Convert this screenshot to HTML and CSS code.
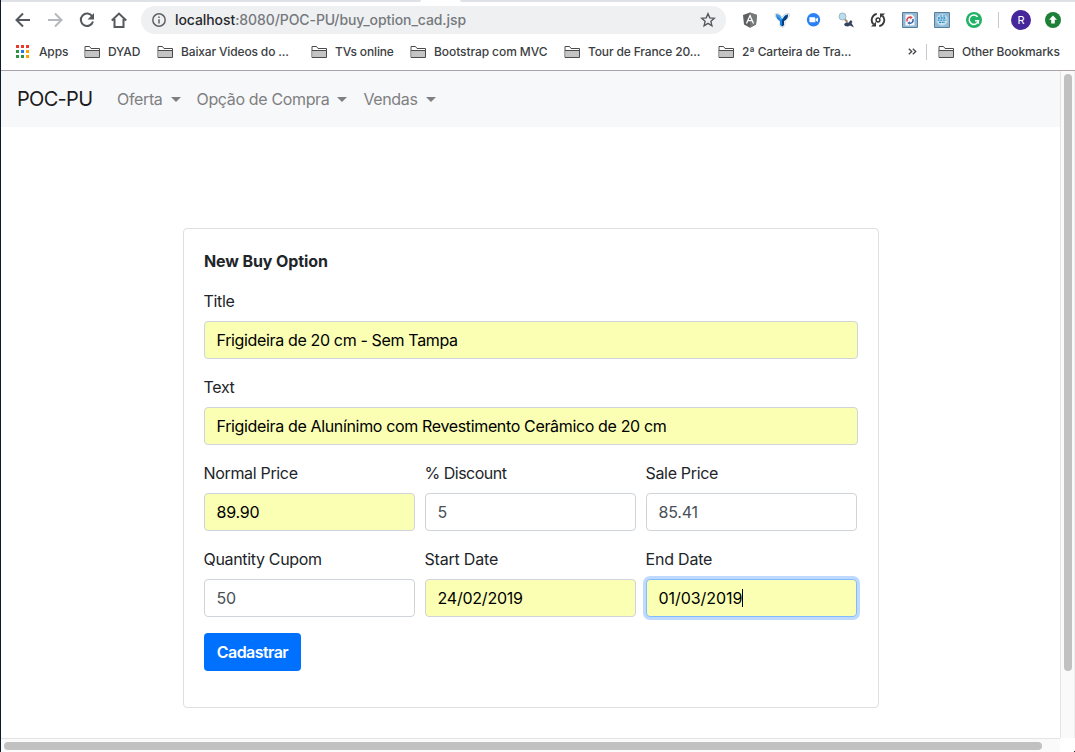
FILE: index.html
```
<!DOCTYPE html>
<html lang="pt-BR">
<head>
<meta charset="utf-8">
<title>POC-PU</title>
<link rel="stylesheet" href="styles.css">
</head>
<body>
<div class="window">
  <header class="chrome">
    <div class="tabstrip"><i class="tab-left"></i><i class="tab-right"></i></div>
    <div class="toolbar">
      <div class="nav-buttons">
        <svg width="16" height="16" viewBox="0 0 16 16" fill="none" stroke="#55595e" stroke-width="2"><path d="M15 8H2M8 1.5L1.5 8 8 14.5"/></svg>
        <svg width="16" height="16" viewBox="0 0 16 16" fill="none" stroke="#b4b7bb" stroke-width="2"><path d="M1 8h13M8 1.500L14.500 8 8 14.500"/></svg>
        <svg width="16" height="16" viewBox="0 0 16 16" fill="none" stroke="#55595e" stroke-width="2"><path d="M13.300 4.500A6.200 6.200 0 1 0 14 9.500"/><path d="M15 1v6.500H8.500z" fill="#55595e" stroke="none"/></svg>
        <svg width="16" height="16" viewBox="0 0 16 16" fill="none" stroke="#55595e" stroke-width="2"><path d="M.8 8.500L8 1.600l7.200 6.900M3.500 7v8h9V7"/></svg>
      </div>
      <div class="omnibox">
        <svg width="14" height="14" viewBox="0 0 14 14" fill="none" stroke="#5f6368" stroke-width="1.500"><circle cx="7" cy="7" r="6.200"/><path d="M7 6.200v4.300M7 3.400v1.600"/></svg>
        <span class="url"><b>localhost</b>:8080/POC-PU/buy_option_cad.jsp</span>
        <svg width="16" height="16" viewBox="0 0 16 16" fill="none" stroke="#55595e" stroke-width="1.400"><path d="M8 1.700l1.800 4.200 4.500.4-3.400 3 1 4.500L8 11.400l-3.900 2.400 1-4.500-3.400-3 4.500-.4z"/></svg>
      </div>
      <div class="extensions">
        <svg width="16" height="16" viewBox="0 0 16 16"><path d="M8 .5L15 3l-1 9.500L8 15.700 2 12.500 1 3z" fill="#5d5f61"/><path d="M8 .5L15 3l-1 9.500L8 15.700z" fill="#77797b"/><path d="M4.500 11.500L8 3.500l3.500 8M5.800 8.700h4.400" fill="none" stroke="#fff" stroke-width="1.300"/></svg>
        <svg width="16" height="16" viewBox="0 0 16 16"><path d="M1.500 1.500l4 .5 2.500 3 3-3 4-.5.500 2.500-4.500 5.500v4l-2.500 2-2.500-1.500v-4L1 4z" fill="#fff" stroke="#d4d4d4"/><path d="M2 2.500q3-1 5 2.500l1 2 1.500-2Q11 2 14 2.500q0 4-4 6.500v4l-2 1.500L6 13V9Q2 6.500 2 2.500z" fill="#1681e4"/><path d="M8 8.500l3-4.500 3-1.500q0 4-4 6.500v4l-2 1.500z" fill="#093a79"/><path d="M3 3.500q2.500 0 4 4" fill="none" stroke="#62bdf6"/></svg>
        <svg width="16" height="16" viewBox="0 0 16 16"><circle cx="7.500" cy="7.700" r="6.700" fill="#2b80f5"/><path d="M3.400 5.200h4.900q1 0 1 1v4H4.400q-1 0-1-1zM9.700 7l2.200-1.600v4.700L9.700 8.500z" fill="#fff"/></svg>
        <svg width="16" height="16" viewBox="0 0 16 16"><circle cx="4.500" cy="4.500" r="3.500" fill="#b9def0" stroke="#9bb7c4"/><path d="M7 7.500l2.500 2.500" stroke="#a08563" stroke-width="1.800"/><path d="M6 12l3-2 1 1 3-3 1.500 2-1 1 2.500 4.500-4-2-2 1-3-.500z" fill="#33425c"/></svg>
        <svg width="16" height="16" viewBox="0 0 16 16" fill="none" stroke="#3a3a3a" stroke-width="1.900"><path d="M6.800 1.900A6.200 6.200 0 0 0 3.400 12.200M9.200 14.100A6.200 6.200 0 0 0 12.600 3.800"/><path d="M1 14.600h5V9.800zM15 1.400h-5v4.800z" fill="#3a3a3a" stroke="none"/><circle cx="8" cy="8" r="1.900" stroke-width="1.500"/></svg>
        <svg width="16" height="16" viewBox="0 0 16 16"><path d="M.5.5h15v15H.5z" fill="#92b8d4" stroke="#56809e"/><path d="M3.500 2.500H10l2.500 2.500v8.500h-9z" fill="#f5f8fb"/><path d="M5.200 9.500A3 3 0 0 1 8.500 5.300" fill="none" stroke="#d74242" stroke-width="1.500"/><path d="M10.800 7A3 3 0 0 1 7.500 11.200" fill="none" stroke="#315fa5" stroke-width="1.500"/><path d="M8.200 3.700l2.500 1.800-2.500 1.800z" fill="#d74242"/><path d="M7.800 12.800L5.300 11l2.500-1.800z" fill="#315fa5"/></svg>
        <svg width="16" height="16" viewBox="0 0 16 16"><path d="M.5.5h15v15H.5z" fill="#92b8d4" stroke="#56809e"/><circle cx="8" cy="7.800" r="5.700" fill="#c9e2f1" stroke="#a9cce0"/><path d="M4 6h8M3.500 8.200h9M5 10.400h6" stroke="#2688c2" stroke-width="1.300" stroke-dasharray="2 .7"/><path d="M6 4h5" stroke="#2688c2" stroke-dasharray="2 1"/></svg>
        <svg width="16" height="16" viewBox="0 0 16 16"><circle cx="8" cy="8" r="8" fill="#20b267"/><path d="M11.600 4.800A4.700 4.700 0 1 0 12.500 8.700H9" fill="none" stroke="#fff" stroke-width="1.500"/><path d="M12.500 8.500v3.300" fill="none" stroke="#fff"/></svg>
      </div>
      <i class="separator"></i>
      <span class="avatar">R</span>
      <svg class="update" width="16" height="16" viewBox="0 0 16 16"><circle cx="8" cy="8" r="8" fill="#1c8136"/><path d="M8 3.500l4 4.200H9.800v3.800H6.200V7.700H4z" fill="#fff"/></svg>
    </div>
    <div class="bookmarks">
      <svg class="apps" width="13" height="13" viewBox="0 0 13 13"><path d="M0 0h3v3H0zM5 0h3v3H5zM10 0h3v3h-3z" fill="#ea3a30"/><path d="M0 5h3v3H0zM0 10h3v3H0zM5 10h3v3H5z" fill="#2d9348"/><path d="M5 5h3v3H5z" fill="#2379e8"/><path d="M10 5h3v3h-3zM10 10h3v3h-3z" fill="#f4a409"/></svg>
      <span class="bm apps-label">Apps</span>
      <svg class="folder" viewBox="0 0 17 14"><use href="#folder"/></svg><span class="bm dyad">DYAD</span>
      <svg class="folder" viewBox="0 0 17 14"><use href="#folder"/></svg><span class="bm videos">Baixar Videos do ...</span>
      <svg class="folder" viewBox="0 0 17 14"><use href="#folder"/></svg><span class="bm tvs">TVs online</span>
      <svg class="folder" viewBox="0 0 17 14"><use href="#folder"/></svg><span class="bm bootstrap">Bootstrap com MVC</span>
      <svg class="folder" viewBox="0 0 17 14"><use href="#folder"/></svg><span class="bm tour">Tour de France 20...</span>
      <svg class="folder" viewBox="0 0 17 14"><use href="#folder"/></svg><span class="bm carteira">2ª Carteira de Tra...</span>
      <svg class="more" width="9" height="7" viewBox="0 0 9 7" fill="none" stroke="#484b4f" stroke-width="1.400"><path d="M.8.700l2.900 2.800L.8 6.300M4.800.700l2.900 2.800-2.900 2.800"/></svg>
      <i class="separator"></i>
      <svg class="folder" viewBox="0 0 17 14"><g id="folder"><path d="M1 12.500V1.500h4.500l1.500 2h8.500v9z" fill="#fff" stroke="#4b4b4b"/><path d="M1.500 5.500h13.500v6.500H1.500z" fill="#c4c4c4"/><path d="M1 5.500h14.500" stroke="#4b4b4b"/></g></svg><span class="bm">Other Bookmarks</span>
    </div>
  </header>
  <div class="viewport">
    <main class="page">
      <nav class="navbar">
        <span class="brand">POC-PU</span>
        <span class="menu">Oferta</span><i class="caret"></i>
        <span class="menu">Opção de Compra</span><i class="caret"></i>
        <span class="menu">Vendas</span><i class="caret"></i>
      </nav>
      <form class="card">
        <h1 class="card-title">New Buy Option</h1>
        <div class="group"><label>Title</label><div class="control filled">Frigideira de 20 cm - Sem Tampa</div></div>
        <div class="group"><label>Text</label><div class="control filled">Frigideira de Alunínimo com Revestimento Cerâmico de 20 cm</div></div>
        <div class="row">
          <div class="group"><label>Normal Price</label><div class="control number filled">89.90</div></div>
          <div class="group"><label class="tight">% Discount</label><div class="control number">5</div></div>
          <div class="group"><label>Sale Price</label><div class="control number">85.41</div></div>
        </div>
        <div class="row">
          <div class="group"><label>Quantity Cupom</label><div class="control number">50</div></div>
          <div class="group"><label class="loose">Start Date</label><div class="control number filled">24/02/2019</div></div>
          <div class="group"><label class="loose">End Date</label><div class="control date filled focused">01/03/2019<i class="cursor"></i></div></div>
        </div>
        <button class="submit" type="button">Cadastrar</button>
      </form>
    </main>
    <div class="vbar"><i></i></div>
    <div class="hbar"><i></i></div>
    <div class="corner"></div>
  </div>
</div>
</body>
</html>
```
FILE: styles.css
```
* { box-sizing: border-box; }
body { margin: 0; background: #fff; color: #212529; font: 16px/24px Inter, sans-serif; overflow: hidden; }
svg { display: block; flex: none; }
.window { width: 1075px; height: 752px; display: flex; flex-direction: column; border-left: 1px solid #111a2c; overflow: hidden; }
.chrome { height: 71px; border-bottom: 1px solid #aaa3a9; background: #fff; flex: none; }
.tabstrip { height: 2px; display: flex; justify-content: space-between; }
.tab-left { width: 420px; background: #dee1e6; border-bottom-right-radius: 2px; }
.tab-right { width: 615px; background: #dee1e6; border-bottom-left-radius: 2px; }
.toolbar { height: 36px; display: flex; align-items: center; }
.nav-buttons { display: flex; gap: 16px; margin-left: 14px; }
.omnibox { width: 585px; height: 28px; margin-left: 14px; padding: 0 10px 0 11px; border-radius: 14px; background: #eff0f2; display: flex; align-items: center; }
.url { flex: 1; margin-left: 9px; font-size: 14px; font-weight: 500; letter-spacing: -.08px; color: #75797d; white-space: nowrap; }
.url b { color: #27292c; font-weight: 500; }
.extensions { display: flex; gap: 16px; margin-left: 16px; }
.separator { width: 1px; height: 16px; background: #c6c8ca; flex: none; }
.toolbar .separator { margin-left: 16px; }
.avatar { width: 20px; height: 20px; margin-left: 12px; border-radius: 50%; background: #46279b; color: #fff; font: 11px/20px Inter, sans-serif; text-align: center; }
.update { margin-left: 14px; }
.bookmarks { height: 27px; display: flex; align-items: center; padding-left: 15px; }
.bm { font-size: 12px; line-height: 16px; font-weight: 500; letter-spacing: -.15px; color: #3c4043; white-space: nowrap; flex: none; }
.apps { margin-right: 10px; }
.apps-label { width: 45px; }
.dyad { width: 49px; }
.videos { width: 130px; }
.tvs { width: 75px; }
.bootstrap { width: 130px; letter-spacing: -.08px; }
.tour { width: 130px; }
.carteira { width: 166px; }
.more { margin-right: 9px; }
.bookmarks .separator { margin-right: 11px; }
.folder { width: 17px; height: 14px; margin-right: 7px; }
.viewport { flex: 1; display: grid; grid-template: 667px 14px / 1059px 15px; }
.page { background: #fff; min-width: 0; }
.navbar { height: 56px; background: #f7f8fa; display: flex; align-items: center; padding-left: 16px; color: #7f8081; }
.brand { color: #1b1c1d; font-size: 20px; letter-spacing: -.7px; width: 76px; margin-right: 24px; white-space: nowrap; }
.menu { white-space: nowrap; letter-spacing: -.35px; }
.caret { border: 5px solid transparent; border-top-color: #7f8081; border-bottom: 0; margin: 0 16px 0 8px; }
.card { width: 696px; height: 480px; margin: 101px 0 0 182px; padding: 20px; border: 1px solid #dfdfdf; border-radius: 4px; }
.card-title { margin: 0 0 16px; font-size: 16px; line-height: 24px; font-weight: 700; letter-spacing: -.1px; }
.group { margin-bottom: 16px; }
.row { display: grid; grid-template-columns: repeat(3, 211px); gap: 10px; }
label { display: block; margin-bottom: 8px; margin-left: -.5px; letter-spacing: -.33px; }
.tight { letter-spacing: -.5px; }
.loose { letter-spacing: -.2px; }
.control { height: 38px; display: flex; align-items: center; padding: 0 11.5px; border: 1px solid #ced4da; border-radius: 4px; color: #495057; white-space: nowrap; letter-spacing: -.35px; }
.number { letter-spacing: -.22px; }
.date { letter-spacing: -.05px; }
.filled { background: #faffb4; color: #000; }
.focused { border-color: #80bdff; box-shadow: 0 0 0 3px #bfd9ff; }
.cursor { width: 1px; height: 18px; background: #000; }
.submit { width: 97px; height: 38px; border: 0; border-radius: 4px; background: #0070ff; color: #fff; font: 600 16px/24px Inter, sans-serif; letter-spacing: -.55px; padding: 0; }
.vbar { border-left: 1px solid #e4e4e4; border-right: 1px solid #ededed; background: #fafafa; padding: 3px 2px 0 3px; }
.vbar i { display: block; width: 8px; height: 597px; border-radius: 4px; background: #c1c1c1; }
.hbar { border-top: 1px solid #e4e4e4; background: #fafafa; padding: 3px 0 0 3px; }
.hbar i { display: block; width: 1038px; height: 8px; border-radius: 4px; background: #c1c1c1; }
.corner { background: linear-gradient(135deg, #fff 93%, #333 95%); }
```
